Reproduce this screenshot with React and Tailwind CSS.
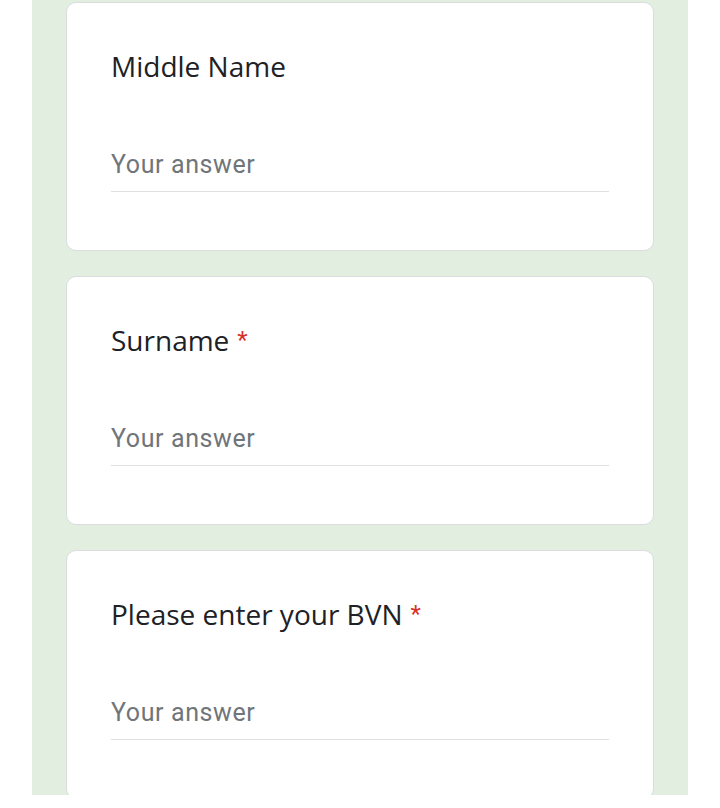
const questions = [
  { title: "Middle Name", required: false },
  { title: "Surname", required: true },
  { title: "Please enter your BVN", required: true },
];

function QuestionCard({ title, required }) {
  return (
    <div className="shrink-0 rounded-[10px] border border-[#dadce0] bg-white pb-[58px] pl-[44px] pr-[44px] pt-[45px]">
      <div className="font-['Open_Sans',sans-serif] text-[28px] leading-[36px] text-[#202124]">
        {title}
        {required && (
          <span className="ml-[8px] align-top font-['Roboto',sans-serif] text-[24px] leading-[36px] text-[#d93025]">
            *
          </span>
        )}
      </div>
      <div className="mt-[65px] border-b border-[#e0e0e0] pb-[10px] text-[25px] leading-[32px] tracking-[0.6px] text-[#70757a]">
        Your answer
      </div>
    </div>
  );
}

export default function App() {
  return (
    <div className="h-[808px] w-[720px] bg-white font-['Roboto',sans-serif]">
      <div className="mx-[32px] flex h-[795px] flex-col gap-[25px] overflow-hidden bg-[#e2eee0] px-[34px] pt-[2px]">
        {questions.map((q) => (
          <QuestionCard key={q.title} {...q} />
        ))}
      </div>
    </div>
  );
}
